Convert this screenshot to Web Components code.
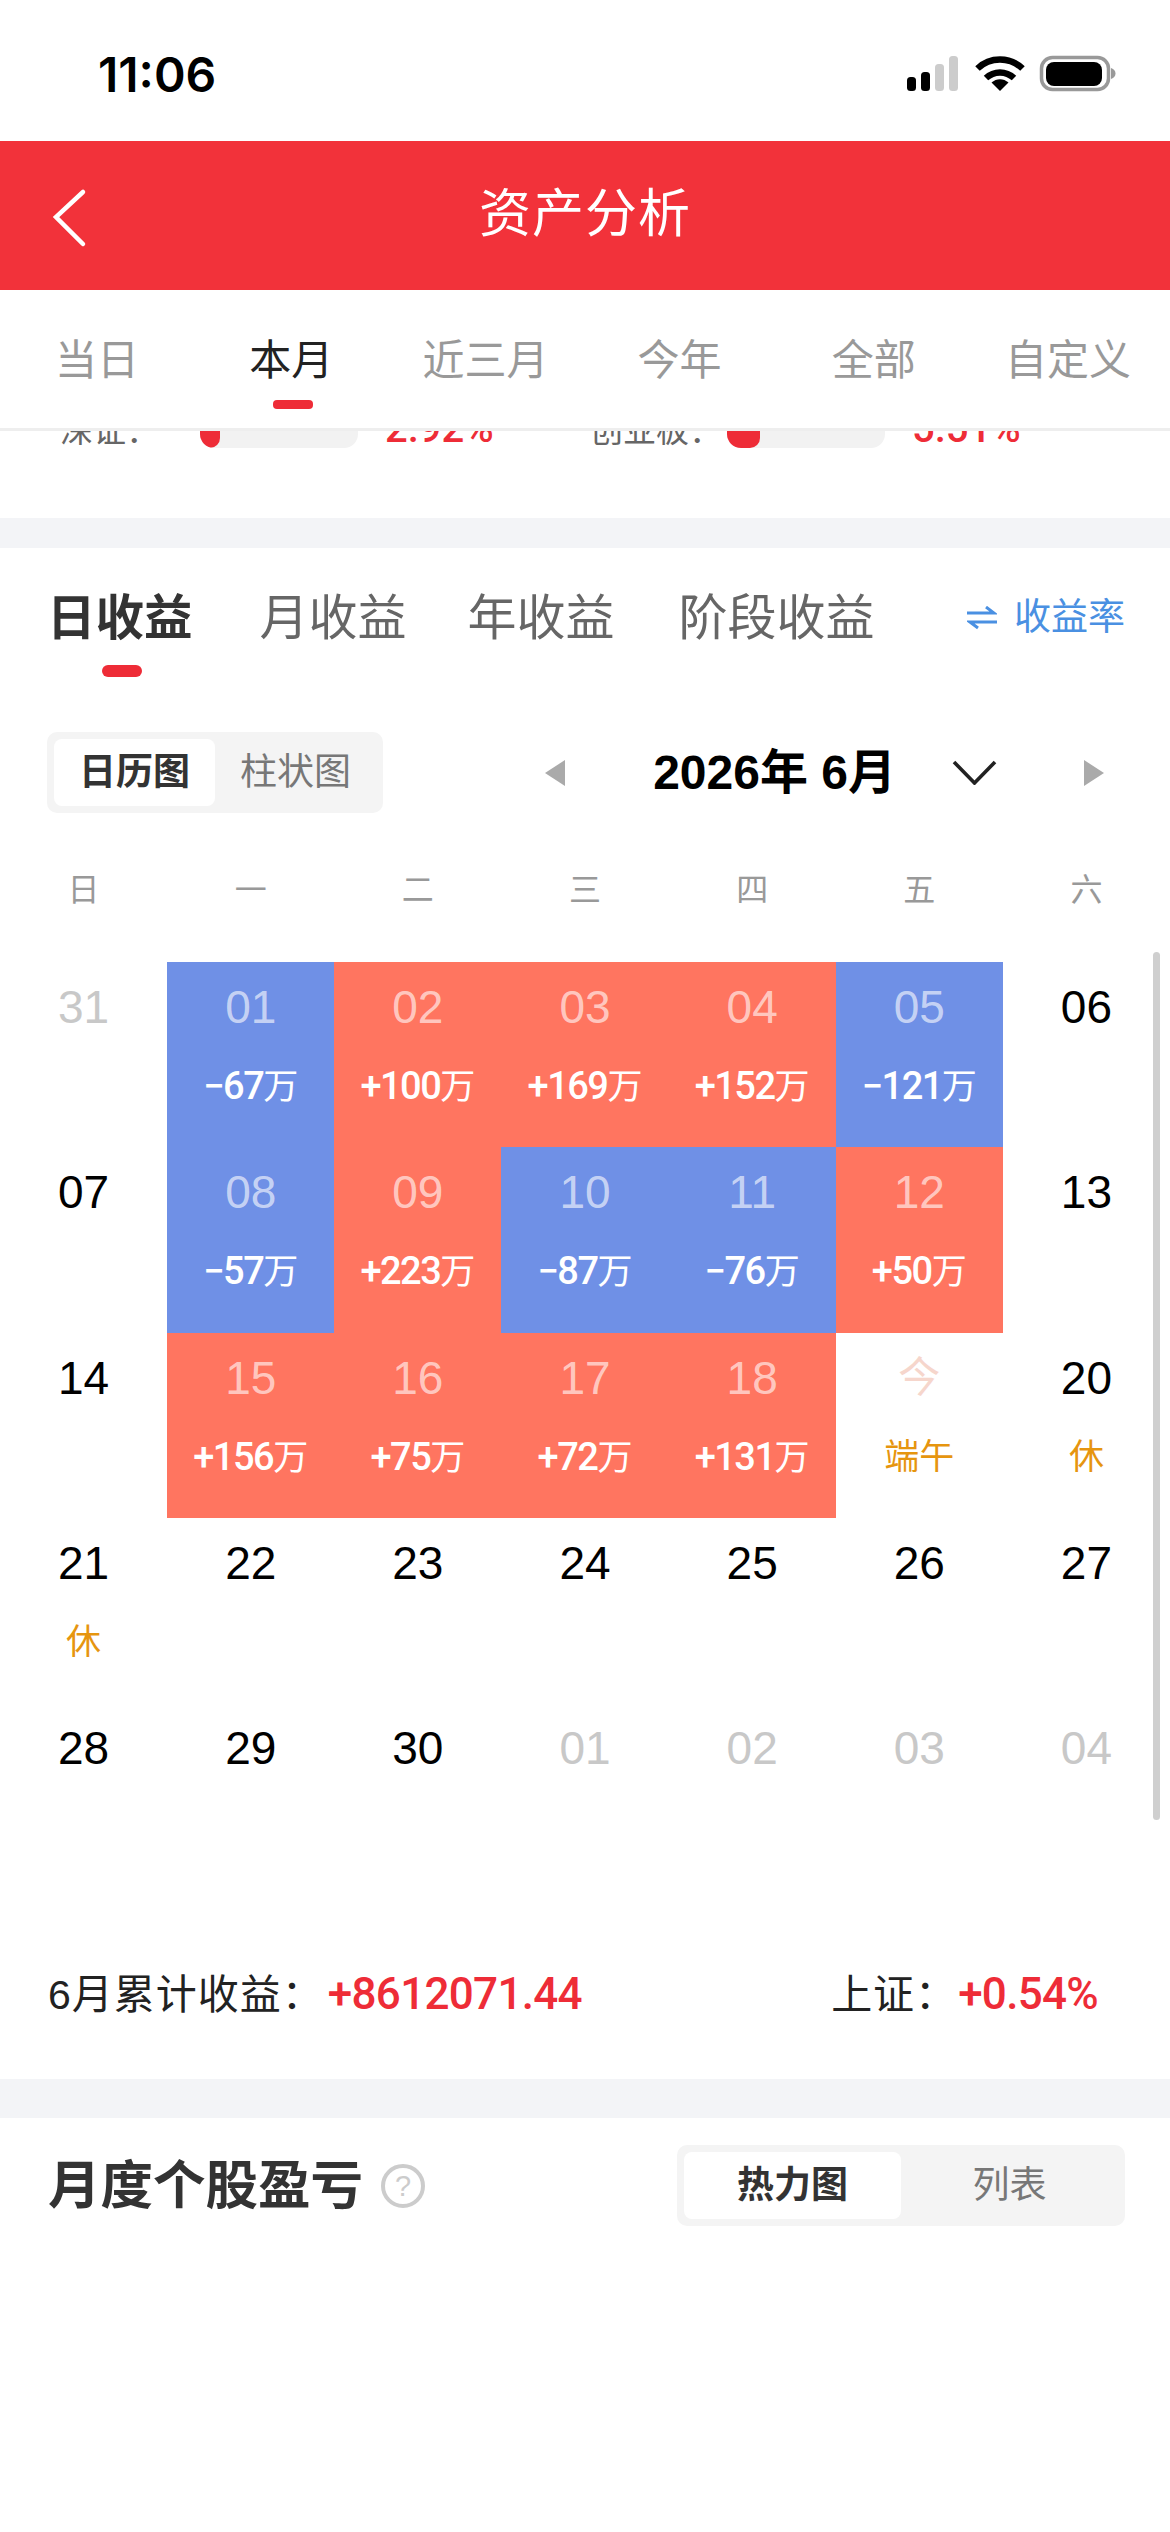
<!DOCTYPE html>
<html lang="zh">
<head>
<meta charset="utf-8">
<title>资产分析</title>
<style>
  html, body { margin: 0; padding: 0; background: #fff; }
  body {
    width: 1170px; height: 2532px; overflow: hidden;
    font-family: "Liberation Sans", "Noto Sans CJK SC", sans-serif;
    -webkit-font-smoothing: antialiased;
  }
</style>
</head>
<body>
<status-bar time="11:06"></status-bar>
<app-header title="资产分析"></app-header>
<range-tabs></range-tabs>
<index-strip>
  <index-item label="深证：" value="2.92%" fill="20" style="--label-w:140px"></index-item>
  <index-item label="创业板：" value="5.51%" fill="33" style="--label-w:137px"></index-item>
</index-strip>
<band-gap style="--h:30px"></band-gap>
<earn-panel>
  <earn-tabs></earn-tabs>
  <div slot="tools" style="display:contents">
    <seg-control left="日历图" right="柱状图" style="--w:336px;--on:161px"></seg-control>
    <month-nav label="2026年 6月"></month-nav>
  </div>
  <cal-grid slot="calendar"></cal-grid>
  <cal-summary slot="summary" month="6月累计收益：" total="+8612071.44" index="上证：" change="+0.54%"></cal-summary>
</earn-panel>
<band-gap style="--h:39px"></band-gap>
<stock-panel></stock-panel>

<script>
// shared font stacks
const CJK = `"Liberation Sans", "Noto Sans CJK SC", sans-serif`;
const NUM = `Roboto, "Noto Sans CJK SC", sans-serif`;

class StatusBar extends HTMLElement {
  constructor() {
    super();
    const root = this.attachShadow({ mode: "open" });
    root.innerHTML = `
      <style>
        :host { display: flex; align-items: center; justify-content: space-between; height: 141px; box-sizing: border-box; padding: 7px 53px 0 98px; background: #fff; }
        .time { padding-top: 2px; font: 600 48px/1 Inter, sans-serif; color: #000; }
        svg { display: block; }
      </style>
      <span class="time"></span>
      <svg width="210" height="38" viewBox="0 0 210 38">
        <g>
          <rect x="0" y="22" width="9" height="14" rx="3.5" fill="#000"/>
          <rect x="14" y="17" width="9" height="19" rx="3.5" fill="#000"/>
          <rect x="28" y="9" width="9" height="27" rx="3.5" fill="#ccc"/>
          <rect x="42" y="1" width="9" height="35" rx="3.5" fill="#ccc"/>
        </g>
        <g fill="none" stroke="#000" stroke-width="6.5">
          <path d="M70.5 13.5 C83 1.5 103 1.5 115.5 13.5"/>
          <path d="M79 23 C87 15.5 99 15.5 107 23"/>
        </g>
        <path d="M93 36 L84.5 27.5 C89.5 23 96.5 23 101.5 27.5 Z" fill="#000"/>
        <rect x="134.5" y="2.5" width="67" height="32" rx="11" fill="none" stroke="#999" stroke-width="3.5"/>
        <rect x="139" y="7" width="56" height="24" rx="8" fill="#000"/>
        <path d="M204 13 C207 14 208.5 16 208.5 18.5 C208.5 21 207 23 204 24 Z" fill="#999"/>
      </svg>`;
    root.querySelector(".time").textContent = this.getAttribute("time");
  }
}
customElements.define("status-bar", StatusBar);

class AppHeader extends HTMLElement {
  constructor() {
    super();
    const root = this.attachShadow({ mode: "open" });
    root.innerHTML = `
      <style>
        :host { display: flex; align-items: center; justify-content: center; position: relative; height: 149px; background: #f2323a; color: #fff; }
        h1 { margin: 0 0 4px 0; font: 400 52px/1 ${CJK}; letter-spacing: 1px; }
        svg { position: absolute; left: 50px; top: 47px; }
      </style>
      <svg width="38" height="60" viewBox="0 0 38 60"><path d="M33 4 L6 29 L33 56" fill="none" stroke="#fff" stroke-width="4.5" stroke-linecap="round" stroke-linejoin="miter"/></svg>
      <h1></h1>`;
    root.querySelector("h1").textContent = this.getAttribute("title");
  }
}
customElements.define("app-header", AppHeader);

class RangeTabs extends HTMLElement {
  constructor() {
    super();
    const root = this.attachShadow({ mode: "open" });
    const items = ["当日", "本月", "近三月", "今年", "全部", "自定义"];
    root.innerHTML = `
      <style>
        :host { display: grid; grid-template-columns: repeat(6, 1fr); height: 141px; box-sizing: border-box; padding-right: 5px; border-bottom: 3px solid #eeeeee; background: #fff; }
        .tab { position: relative; text-align: center; padding-top: 48px; font: 400 42px/46px ${CJK}; color: #999; white-space: nowrap; }
        .tab.on { color: #222; }
        .tab.on::after { content: ""; position: absolute; left: 50%; margin-left: -18px; top: 110px; width: 40px; height: 9px; border-radius: 4px; background: #ee2c37; }
      </style>
      ${items.map((t, i) => `<div class="tab${i === 1 ? " on" : ""}">${t}</div>`).join("")}`;
  }
}
customElements.define("range-tabs", RangeTabs);

class IndexStrip extends HTMLElement {
  constructor() {
    super();
    this.attachShadow({ mode: "open" }).innerHTML = `
      <style>
        :host { display: block; height: 87px; overflow: hidden; background: #fff; }
        .row { display: flex; margin-top: -20px; padding-left: 60px; gap: 0; }
      </style>
      <div class="row"><slot></slot></div>`;
  }
}
customElements.define("index-strip", IndexStrip);

class IndexItem extends HTMLElement {
  constructor() {
    super();
    const root = this.attachShadow({ mode: "open" });
    root.innerHTML = `
      <style>
        :host { display: flex; align-items: center; width: 530px; height: 40px; flex: none; }
        .lbl { width: var(--label-w, 140px); font: 400 33px/40px ${CJK}; color: #666; white-space: nowrap; }
        .bar { width: 158px; height: 34px; border-radius: 0 14px 14px 14px; background: #f2f2f2; overflow: hidden; margin-right: 27px; }
        .fill { height: 100%; background: #ee2c37; border-radius: 0 0 10px 10px; }
        .val { margin-bottom: 4px; font: 500 40px/40px ${NUM}; color: #ee2c37; }
      </style>
      <span class="lbl"></span>
      <div class="bar"><div class="fill"></div></div>
      <span class="val"></span>`;
    root.querySelector(".lbl").textContent = this.getAttribute("label");
    root.querySelector(".val").textContent = this.getAttribute("value");
    root.querySelector(".fill").style.width = this.getAttribute("fill") + "px";
  }
}
customElements.define("index-item", IndexItem);

class BandGap extends HTMLElement {
  constructor() {
    super();
    this.attachShadow({ mode: "open" }).innerHTML = `
      <style>:host { display: block; height: var(--h, 30px); background: #f3f4f7; }</style>`;
  }
}
customElements.define("band-gap", BandGap);

class EarnPanel extends HTMLElement {
  constructor() {
    super();
    this.attachShadow({ mode: "open" }).innerHTML = `
      <style>
        :host { display: block; position: relative; height: 1531px; background: #fff; }
        .tools { display: flex; align-items: center; justify-content: space-between; padding: 55px 66px 0 47px; }
        .week { display: grid; grid-template-columns: repeat(7, 1fr); margin-top: 47px; height: 60px; text-align: center; font: 400 32px/60px ${CJK}; color: #999; }
        .cal { margin-top: 42px; }
        .bar { position: absolute; right: 10px; top: 404px; width: 7px; height: 868px; border-radius: 4px; background: #cfcfcf; }
      </style>
      <slot></slot>
      <div class="tools"><slot name="tools"></slot></div>
      <div class="week">${[..."日一二三四五六"].map((d) => `<span>${d}</span>`).join("")}</div>
      <div class="cal"><slot name="calendar"></slot></div>
      <slot name="summary"></slot>
      <div class="bar"></div>`;
  }
}
customElements.define("earn-panel", EarnPanel);

class EarnTabs extends HTMLElement {
  constructor() {
    super();
    const root = this.attachShadow({ mode: "open" });
    root.innerHTML = `
      <style>
        :host { display: flex; align-items: flex-start; height: 129px; box-sizing: border-box; padding: 42px 45px 0 47px; gap: 64px; }
        .t { position: relative; font: 400 49px/56px ${CJK}; color: #666; white-space: nowrap; }
        .t.on { font-size: 48.5px; font-weight: 700; color: #333; margin-right: 3px; }
        .t.on::after { content: ""; position: absolute; left: 55px; top: 75px; width: 40px; height: 12px; border-radius: 6px; background: #ee2c37; }
        .link { margin-left: auto; display: flex; align-items: center; gap: 17px; font: 400 37px/56px ${CJK}; color: #4a90e2; white-space: nowrap; }
      </style>
      <span class="t on">日收益</span>
      <span class="t">月收益</span>
      <span class="t" style="margin-left:-3px">年收益</span>
      <span class="t">阶段收益</span>
      <span class="link">
        <svg width="30" height="24" viewBox="0 0 30 24" fill="none" stroke="#4a90e2" stroke-width="3"><path d="M0 7 H27 L19 1"/><path d="M30 16 H3 L11 22"/></svg>
        收益率
      </span>`;
  }
}
customElements.define("earn-tabs", EarnTabs);

class SegControl extends HTMLElement {
  constructor() {
    super();
    const root = this.attachShadow({ mode: "open" });
    root.innerHTML = `
      <style>
        :host { display: flex; width: var(--w); height: 81px; box-sizing: border-box; padding: 7px; border-radius: 10px; background: #f4f4f4; font: 400 37px/67px ${CJK}; text-align: center; color: #777; white-space: nowrap; }
        .a { width: var(--on); border-radius: 8px; background: #fff; color: #333; font-weight: 700; }
        .b { flex: 1; }
      </style>
      <div class="a"></div><div class="b"></div>`;
    root.querySelector(".a").textContent = this.getAttribute("left");
    root.querySelector(".b").textContent = this.getAttribute("right");
  }
}
customElements.define("seg-control", SegControl);

class MonthNav extends HTMLElement {
  constructor() {
    super();
    const root = this.attachShadow({ mode: "open" });
    root.innerHTML = `
      <style>
        :host { display: flex; align-items: center; }
        b { font: 700 48px/60px ${CJK}; color: #000; white-space: nowrap; margin: 0 56px 0 88px; }
        svg { display: block; }
      </style>
      <svg width="20" height="26" viewBox="0 0 20 26"><path d="M20 0 V26 L0 13 Z" fill="#aaa"/></svg>
      <b></b>
      <svg width="45" height="25" viewBox="0 0 45 25"><path d="M2 2 L22.5 23 L43 2" fill="none" stroke="#222" stroke-width="3.6"/></svg>
      <svg style="margin-left:87px" width="20" height="26" viewBox="0 0 20 26"><path d="M0 0 V26 L20 13 Z" fill="#aaa"/></svg>`;
    root.querySelector("b").textContent = this.getAttribute("label");
  }
}
customElements.define("month-nav", MonthNav);

class CalDay extends HTMLElement {
  constructor() {
    super();
    const root = this.attachShadow({ mode: "open" });
    root.innerHTML = `
      <style>
        :host { display: block; text-align: center; color: #000; white-space: nowrap; }
        :host([tone="up"]) { background: #ff7560; }
        :host([tone="down"]) { background: #6f90e6; }
        .n { height: 90px; font: 400 46px/90px ${CJK}; }
        :host([tone]) .n { color: rgba(255,255,255,.62); }
        :host([muted]) .n { color: #c8c8c8; }
        :host([today]) .n { color: #f6d6cc; font-size: 42px; }
        .s { height: 68px; font: 500 38px/68px ${NUM}; letter-spacing: -1.5px; color: #fff; }
        .s span { font-weight: 400; font-size: 35px; letter-spacing: 0; }
        .s.note { font: 400 35px/68px ${CJK}; letter-spacing: 0; color: #e6950f; }
      </style>
      <div class="n"></div><div class="s"></div>`;
    root.querySelector(".n").textContent = this.getAttribute("n");
    const sub = root.querySelector(".s");
    const val = this.getAttribute("sub");
    if (val) {
      sub.innerHTML = `${val.slice(0, -1)}<span>${val.slice(-1)}</span>`;
    } else {
      sub.textContent = this.getAttribute("note") || "";
      if (this.hasAttribute("note")) sub.classList.add("note");
    }
  }
}
customElements.define("cal-day", CalDay);

class CalGrid extends HTMLElement {
  constructor() {
    super();
    const root = this.attachShadow({ mode: "open" });
    const data = [
      { n: "31", muted: 1 }, { n: "01", sub: "−67万" }, { n: "02", sub: "+100万" }, { n: "03", sub: "+169万" }, { n: "04", sub: "+152万" }, { n: "05", sub: "−121万" }, { n: "06" },
      { n: "07" }, { n: "08", sub: "−57万" }, { n: "09", sub: "+223万" }, { n: "10", sub: "−87万" }, { n: "11", sub: "−76万" }, { n: "12", sub: "+50万" }, { n: "13" },
      { n: "14" }, { n: "15", sub: "+156万" }, { n: "16", sub: "+75万" }, { n: "17", sub: "+72万" }, { n: "18", sub: "+131万" }, { n: "今", note: "端午", today: 1 }, { n: "20", note: "休" },
      { n: "21", note: "休" }, { n: "22" }, { n: "23" }, { n: "24" }, { n: "25" }, { n: "26" }, { n: "27" },
      { n: "28" }, { n: "29" }, { n: "30" }, { n: "01", muted: 1 }, { n: "02", muted: 1 }, { n: "03", muted: 1 }, { n: "04", muted: 1 },
    ];
    root.innerHTML = `
      <style>:host { display: grid; grid-template-columns: repeat(7, 1fr); grid-auto-rows: 185.25px; }</style>
      ${data.map((d) => {
        const tone = d.sub ? (d.sub[0] === "+" ? "up" : "down") : "";
        return `<cal-day n="${d.n}"${d.sub ? ` sub="${d.sub}" tone="${tone}"` : ""}${d.note ? ` note="${d.note}"` : ""}${d.muted ? " muted" : ""}${d.today ? " today" : ""}></cal-day>`;
      }).join("")}`;
  }
}
customElements.define("cal-grid", CalGrid);

class CalSummary extends HTMLElement {
  constructor() {
    super();
    const root = this.attachShadow({ mode: "open" });
    root.innerHTML = `
      <style>
        :host { display: flex; align-items: center; justify-content: space-between; padding: 82px 72px 0 48px; height: 48px; font: 400 41px/48px ${CJK}; letter-spacing: 1px; color: #222; }
        span { white-space: nowrap; }
        i { font: 500 44px/48px ${NUM}; letter-spacing: -.7px; color: #ee2c37; margin-left: 4px; }
        .m + .m i { margin-left: 1px; }
      </style>
      <span class="m"><span class="a"></span><i class="b"></i></span>
      <span class="m"><span class="c"></span><i class="d"></i></span>`;
    root.querySelector(".a").textContent = this.getAttribute("month");
    root.querySelector(".b").textContent = this.getAttribute("total");
    root.querySelector(".c").textContent = this.getAttribute("index");
    root.querySelector(".d").textContent = this.getAttribute("change");
  }
}
customElements.define("cal-summary", CalSummary);

class StockPanel extends HTMLElement {
  constructor() {
    super();
    this.attachShadow({ mode: "open" }).innerHTML = `
      <style>
        :host { display: flex; align-items: center; height: 414px; box-sizing: border-box; padding: 27px 45px 306px 48px; background: #fff; }
        h2 { margin: 0; font: 700 52.5px/81px ${CJK}; color: #333; }
        .q { width: 36px; height: 36px; margin-left: 18px; border: 4px solid #ccc; border-radius: 50%; font: 400 29px/36px ${CJK}; color: #ccc; text-align: center; }
        seg-control { margin-left: auto; }
      </style>
      <h2>月度个股盈亏</h2>
      <div class="q">?</div>
      <seg-control left="热力图" right="列表" style="--w:448px;--on:217px"></seg-control>`;
  }
}
customElements.define("stock-panel", StockPanel);
</script>
</body>
</html>
